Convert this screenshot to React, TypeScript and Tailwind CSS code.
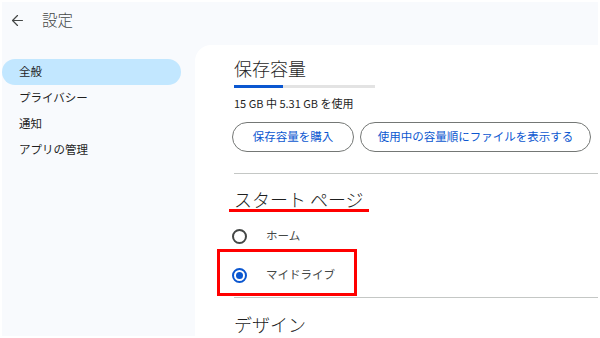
import { ArrowLeft } from 'lucide-react';

const FONT = { fontFamily: '"Noto Sans CJK JP", "Noto Sans", Roboto, sans-serif' };

const NAV = ['全般', 'プライバシー', '通知', 'アプリの管理'];

function Radio({ label, checked }: { label: string; checked?: boolean }) {
  return (
    <div className={`flex items-center gap-[19px] ml-[-2px] ${checked ? 'h-[40px]' : 'h-[38px]'}`}>
      <span
        className={`w-[15px] h-[15px] rounded-full border-2 flex items-center justify-center ${
          checked ? 'border-[#0b57d0]' : 'border-[#444746]'
        }`}
      >
        {checked && <span className="w-[7px] h-[7px] rounded-full bg-[#0b57d0]" />}
      </span>
      <span className="text-[11.5px] text-[#444746]">{label}</span>
    </div>
  );
}

export default function App() {
  return (
    <div className="w-[600px] h-[338px] bg-white p-[2px] overflow-hidden" style={FONT}>
      <div className="w-full h-full bg-[#f8fafd] flex flex-col">
        <div className="h-[43px] flex items-center pb-[7px] shrink-0">
          <ArrowLeft className="ml-[7px] w-[17px] h-[17px] text-[#444746]" strokeWidth={1.7} />
          <span className="ml-[16px] text-[15.5px] font-light text-[#444746]">設定</span>
        </div>

        <div className="flex flex-1 min-h-0">
          <nav className="w-[193px] shrink-0 pt-[14px] flex flex-col">
            {NAV.map((item, i) => (
              <div
                key={item}
                className={`h-[26px] w-[179px] flex items-center pl-[17px] text-[11.5px] text-[#1f1f1f] rounded-r-full ${
                  i === 0 ? 'bg-[#c2e7ff] rounded-l-full' : ''
                }`}
              >
                {item}
              </div>
            ))}
          </nav>

          <main className="relative flex-1 bg-white rounded-tl-[16px] pl-[39px] pt-[11px] flex flex-col">
            <h2 className="text-[18px] leading-[24px] font-light text-[#1f1f1f]">保存容量</h2>
            <div className="mt-[5px] w-[141px] h-[3px] bg-[#e3e3e3] flex">
              <div className="w-[49px] h-full bg-[#0b57d0]" />
            </div>
            <p className="mt-[7px] text-[11px] leading-[16px] text-[#1f1f1f]">15 GB 中 5.31 GB を使用</p>
            <div className="mt-[11px] flex gap-[6px] ml-[-2px]">
              <button className="w-[122px] h-[30px] rounded-full border border-[#747775] text-[11.5px] text-[#0b57d0] flex items-center justify-center">
                保存容量を購入
              </button>
              <button className="w-[231px] h-[30px] rounded-full border border-[#747775] text-[11.5px] text-[#0b57d0] flex items-center justify-center">
                使用中の容量順にファイルを表示する
              </button>
            </div>

            <div className="mt-[21px] h-px bg-[#c4c7c5]" />

            <h2 className="mt-[13px] text-[18px] leading-[24px] font-light text-[#1f1f1f]">スタート ページ</h2>
            <div className="mt-[6px] flex flex-col">
              <Radio label="ホーム" />
              <Radio label="マイドライブ" checked />
            </div>

            <div className="mt-[2px] h-px bg-[#c4c7c5]" />

            <h2 className="mt-[14px] text-[18px] leading-[24px] font-light text-[#1f1f1f]">デザイン</h2>

            {/* annotations */}
            <div className="absolute left-[34px] top-[164px] w-[140px] h-[3px] bg-[#ff0000]" />
            <div className="absolute left-[22px] top-[204px] w-[140px] h-[47px] border-[3px] border-[#ff0000]" />
          </main>
        </div>
      </div>
    </div>
  );
}
